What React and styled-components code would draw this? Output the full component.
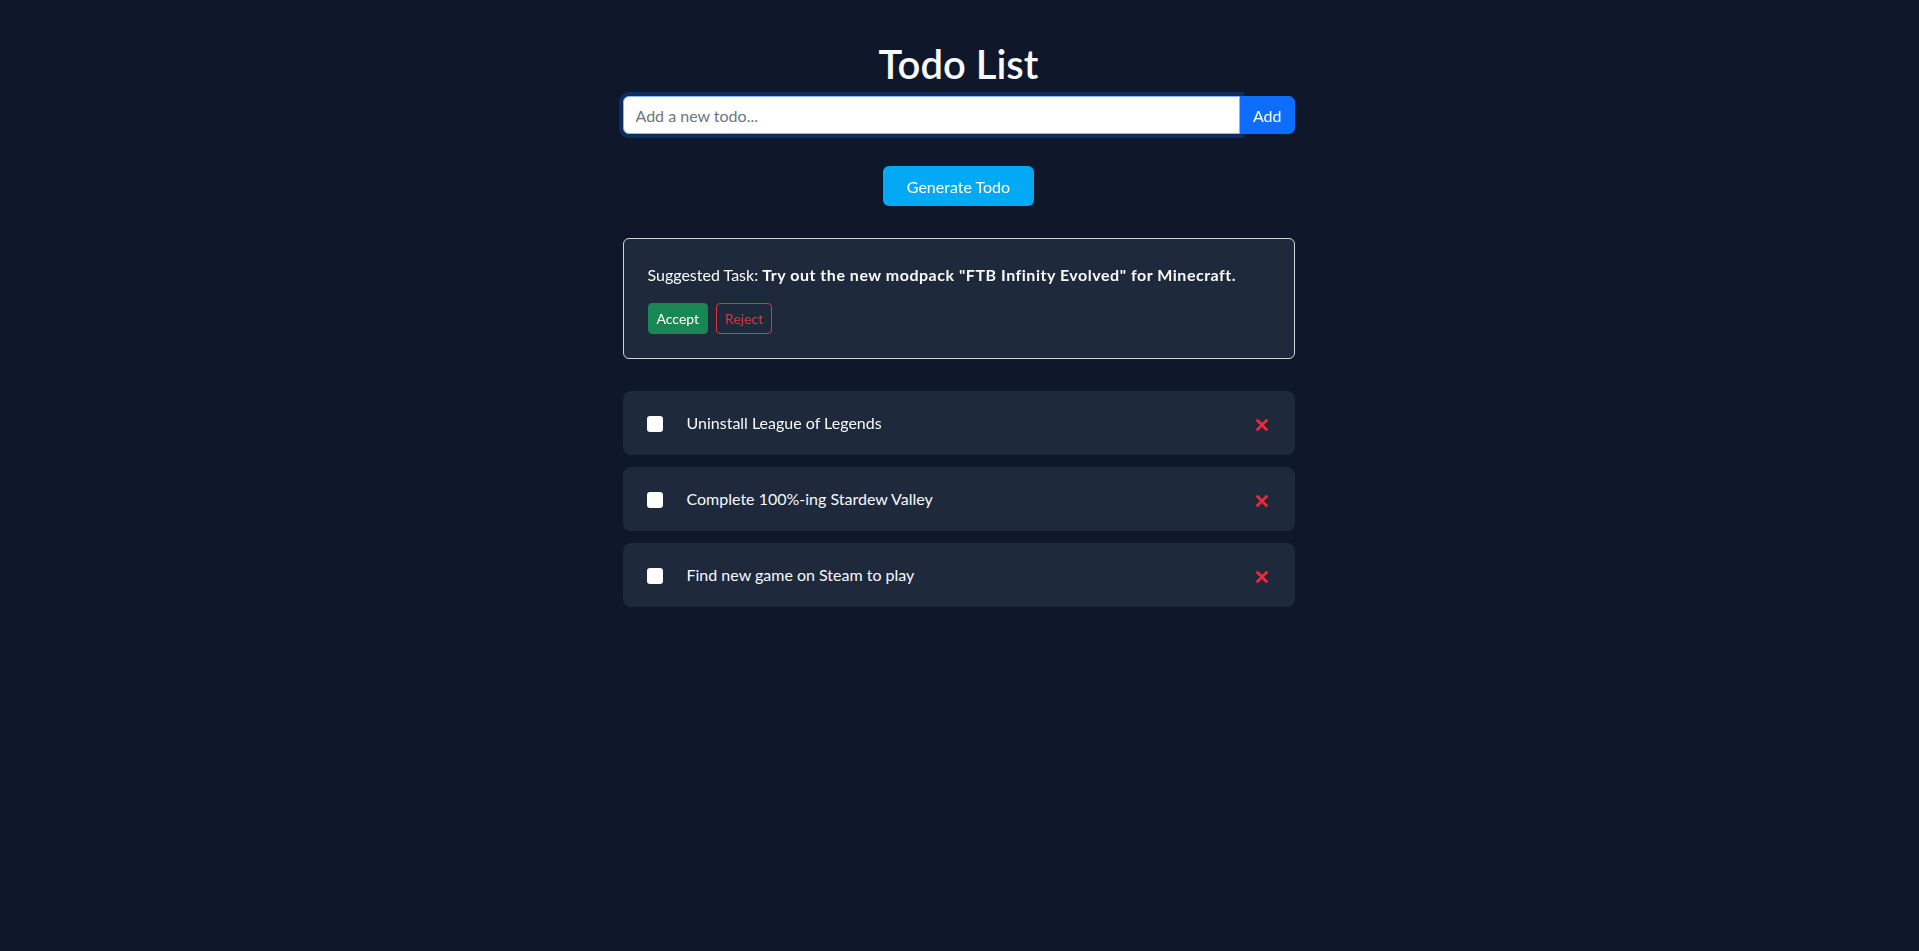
import React, { useState } from 'react'
import styled, { createGlobalStyle } from 'styled-components'

const GlobalStyle = createGlobalStyle`
  body {
    margin: 0;
    background-color: #0f172a;
    color: #f8fafc;
    font-family: Lato, 'Noto Sans', sans-serif;
    font-size: 16px;
    line-height: 1.5;
  }
  * {
    box-sizing: border-box;
  }
`

const initialTodos = [
  { id: 1, text: 'Uninstall League of Legends', done: false },
  { id: 2, text: 'Complete 100%-ing Stardew Valley', done: false },
  { id: 3, text: 'Find new game on Steam to play', done: false },
]

const App = () => {
  const [todos, setTodos] = useState(initialTodos)
  const [value, setValue] = useState('')

  const toggle = (id) => {
    setTodos(todos.map((t) => (t.id === id ? { ...t, done: !t.done } : t)))
  }
  const remove = (id) => {
    setTodos(todos.filter((t) => t.id !== id))
  }

  return (
    <>
      <GlobalStyle />
      <Page>
        <Title>Todo List</Title>
        <InputRow>
          <TodoInput
            autoFocus
            placeholder='Add a new todo...'
            value={value}
            onChange={(e) => setValue(e.target.value)}
          />
          <AddButton type='button'>Add</AddButton>
        </InputRow>
        <Center>
          <GenerateButton type='button'>Generate Todo</GenerateButton>
        </Center>
        <SuggestionCard>
          <SuggestionText>
            Suggested Task:{' '}
            <strong>Try out the new modpack "FTB Infinity Evolved" for Minecraft.</strong>
          </SuggestionText>
          <Actions>
            <SmallButton $variant='accept'>Accept</SmallButton>
            <SmallButton $variant='reject'>Reject</SmallButton>
          </Actions>
        </SuggestionCard>
        <TodoList>
          {todos.map((todo) => (
            <TodoItem key={todo.id}>
              <Check type='checkbox' checked={todo.done} onChange={() => toggle(todo.id)} />
              <TodoText>{todo.text}</TodoText>
              <DeleteButton type='button' onClick={() => remove(todo.id)} aria-label='Delete'>
                <svg width='12' height='12' viewBox='0 0 12 12'>
                  <path
                    d='M1.6 1.6 L10.4 10.4 M10.4 1.6 L1.6 10.4'
                    stroke='#f1263a'
                    strokeWidth='2.8'
                    strokeLinecap='square'
                  />
                </svg>
              </DeleteButton>
            </TodoItem>
          ))}
        </TodoList>
      </Page>
    </>
  )
}

export default App

const Page = styled.main`
  width: 672px;
  margin: 0 0 0 calc(50% - 337px);
  padding-top: 40px;
`

const Title = styled.h1`
  margin: 0 0 8px;
  text-align: center;
  font-size: 40px;
  font-weight: 600;
  line-height: 1.2;
  color: #f8fafc;
`

const InputRow = styled.div`
  display: flex;
  height: 38px;
`

const TodoInput = styled.input`
  flex: 1;
  min-width: 0;
  padding: 6px 12px;
  font-family: inherit;
  font-size: 16px;
  color: #212529;
  background: #fff;
  border: 1px solid #86b7fe;
  border-radius: 6px 0 0 6px;
  box-shadow: 0 0 0 4px rgba(13, 110, 253, 0.25);
  outline: none;

  &::placeholder {
    color: #6c757d;
  }
`

const AddButton = styled.button`
  padding: 6px 12px;
  font-family: inherit;
  font-size: 16px;
  color: #fff;
  background-color: #0d6efd;
  border: 1px solid #0d6efd;
  border-radius: 0 6px 6px 0;
  cursor: pointer;
`

const Center = styled.div`
  display: flex;
  justify-content: center;
  margin-top: 32px;
`

const GenerateButton = styled.button`
  height: 40px;
  padding: 0 24px;
  font-family: inherit;
  font-size: 16px;
  color: #fff;
  background-color: #03a9f4;
  border: none;
  border-radius: 6px;
  cursor: pointer;
`

const SuggestionCard = styled.section`
  margin-top: 32px;
  padding: 24px;
  background-color: #1e293b;
  border: 1px solid #d1d5db;
  border-radius: 6px;
`

const SuggestionText = styled.p`
  margin: 0 0 16px;
  font-size: 16px;
  color: #f8fafc;

  strong {
    font-weight: 700;
    letter-spacing: 0.52px;
  }
`

const Actions = styled.div`
  display: flex;
  gap: 8px;
`

const SmallButton = styled.button`
  height: 31px;
  padding: 0 8px;
  font-family: inherit;
  font-size: 14px;
  border-radius: 4px;
  cursor: pointer;
  color: ${({ $variant }) => ($variant === 'accept' ? '#fff' : '#dc3545')};
  background-color: ${({ $variant }) => ($variant === 'accept' ? '#198754' : 'transparent')};
  border: 1px solid ${({ $variant }) => ($variant === 'accept' ? '#198754' : '#dc3545')};
`

const TodoList = styled.ul`
  list-style: none;
  margin: 32px 0 0;
  padding: 0;
  display: flex;
  flex-direction: column;
  gap: 12px;
`

const TodoItem = styled.li`
  display: flex;
  align-items: center;
  height: 64px;
  padding: 0 24px;
  background-color: #1e293b;
  border-radius: 8px;
`

const Check = styled.input`
  appearance: none;
  width: 16px;
  height: 16px;
  margin: 1px 24px 0 0;
  background: #fff;
  border-radius: 3px;
  cursor: pointer;

  &:checked {
    background: #0d6efd;
  }
`

const TodoText = styled.span`
  flex: 1;
  font-size: 16px;
  color: #f8fafc;
`

const DeleteButton = styled.button`
  display: flex;
  align-items: center;
  padding: 4px 3px 0 2px;
  background: none;
  border: none;
  cursor: pointer;
`
